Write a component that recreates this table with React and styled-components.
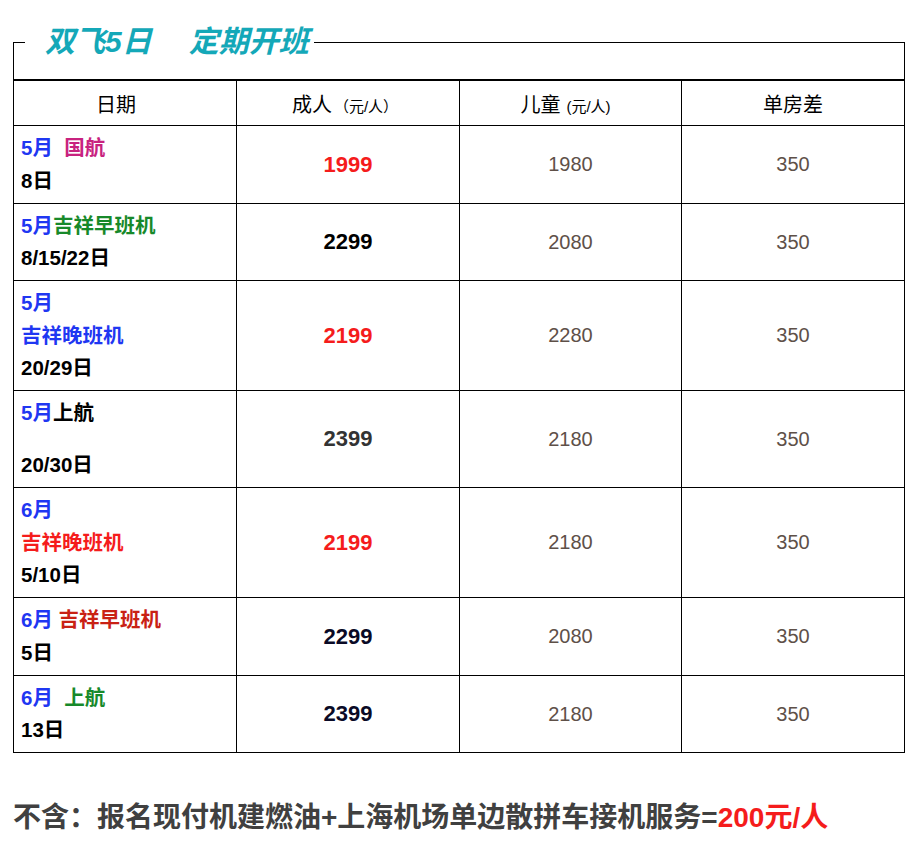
import React from "react";
import styled, { createGlobalStyle } from "styled-components";

const GlobalStyle = createGlobalStyle`
  *, *::before, *::after { box-sizing: border-box; }
  html, body { margin: 0; padding: 0; background: #ffffff; }
  body {
    font-family: "Liberation Sans", "Noto Sans CJK SC", Arial, sans-serif;
    color: #000;
  }
`;

const TONES = {
  blue: "#1f37f2",
  magenta: "#c8237f",
  green: "#17892a",
  red: "#f51c1c",
  darkred: "#c92114",
  black: "#000000",
  grey: "#333333",
  navy: "#0a0a26",
};

const Page = styled.div`
  padding: 42px 10px 0 13px;
  width: 915px;
`;

const Frame = styled.div`
  position: relative;
  width: 892px;
  height: 37px;
  border: 1px solid #000;
  border-bottom: none;
`;

const Title = styled.h1`
  position: absolute;
  top: -16px;
  left: 11px;
  margin: 0;
  padding: 0 5px 0 20px;
  background: #fff;
  font-family: "Liberation Sans", "Noto Sans CJK SC", sans-serif;
  font-size: 30px;
  line-height: 30px;
  font-weight: 700;
  font-style: italic;
  color: #14a8b8;
  white-space: nowrap;
`;

const TitleGap = styled.span`
  display: inline-block;
  width: 37px;
`;

const Table = styled.table`
  width: 892px;
  table-layout: fixed;
  border-collapse: separate;
  border-spacing: 0;
  border-left: 1px solid #000;
  border-top: 2px solid #000;
`;

const Head = styled.th`
  width: ${(p) => p.$w}px;
  height: 45px;
  padding: 0 ${(p) => p.$pr || 0}px 0 0;
  border-right: 1px solid #000;
  border-bottom: 1px solid #000;
  font-weight: 400;
  font-size: 20px;
  text-align: center;
  vertical-align: middle;
  color: #000;
  white-space: nowrap;
`;

const Unit = styled.span`
  font-size: 15px;
  margin-left: ${(p) => p.$ml || 2}px;
`;

const Cell = styled.td`
  padding: 6px 7px 5.5px;
  border-right: 1px solid #000;
  border-bottom: 1px solid #000;
  vertical-align: middle;
`;

const DateCell = styled(Cell)`
  text-align: left;
  font-size: 20.5px;
  line-height: 32.5px;
  font-weight: 700;
`;

const Line = styled.div`
  white-space: pre;
`;

const Gap = styled.div`
  height: 19.5px;
`;

const Tone = styled.span`
  color: ${(p) => TONES[p.$tone] || "#000"};
`;

const PriceCell = styled(Cell)`
  text-align: center;
  font-size: 22px;
  font-weight: 700;
  color: ${(p) => TONES[p.$tone]};
`;

const PlainCell = styled(Cell)`
  text-align: center;
  font-size: 20px;
  font-weight: 400;
  color: #5e5048;
`;

const Footer = styled.p`
  margin: 48px 0 0 0;
  font-family: "Liberation Sans", "Noto Sans CJK SC", sans-serif;
  font-size: 28px;
  line-height: 34px;
  font-weight: 700;
  color: #404040;
  white-space: nowrap;
`;

const Accent = styled.span`
  color: #f51c1c;
`;

const NB = "\u00a0";

const rows = [
  {
    lines: [
      [["5月", "blue"], [NB + NB + "国航", "magenta"]],
      [["8日", "black"]],
    ],
    price: "1999",
    priceTone: "red",
    child: "1980",
  },
  {
    lines: [
      [["5月", "blue"], ["吉祥早班机", "green"]],
      [["8/15/22日", "black"]],
    ],
    price: "2299",
    priceTone: "black",
    child: "2080",
  },
  {
    lines: [
      [["5月", "blue"]],
      [["吉祥晚班机", "blue"]],
      [["20/29日", "black"]],
    ],
    price: "2199",
    priceTone: "red",
    child: "2280",
  },
  {
    lines: [[["5月", "blue"], ["上航", "black"]], "gap", [["20/30日", "black"]]],
    price: "2399",
    priceTone: "grey",
    child: "2180",
  },
  {
    lines: [
      [["6月", "blue"]],
      [["吉祥晚班机", "red"]],
      [["5/10日", "black"]],
    ],
    price: "2199",
    priceTone: "red",
    child: "2180",
  },
  {
    lines: [
      [["6月", "blue"], [NB + "吉祥早班机", "darkred"]],
      [["5日", "black"]],
    ],
    price: "2299",
    priceTone: "navy",
    child: "2080",
  },
  {
    lines: [
      [["6月", "blue"], [NB + NB + "上航", "green"]],
      [["13日", "black"]],
    ],
    price: "2399",
    priceTone: "navy",
    child: "2180",
  },
];

export default function App() {
  return (
    <>
      <GlobalStyle />
      <Page>
        <Frame>
          <Title>
            双飞5日
            <TitleGap />
            定期开班
          </Title>
        </Frame>
        <Table>
          <thead>
            <tr>
              <Head $w={223} $pr={18}>日期</Head>
              <Head $w={223} $pr={6}>
                成人<Unit $ml={2}>（元/人）</Unit>
              </Head>
              <Head $w={222} $pr={10}>
                儿童<Unit $ml={6}>(元/人)</Unit>
              </Head>
              <Head $w={223}>单房差</Head>
            </tr>
          </thead>
          <tbody>
            {rows.map((r, i) => (
              <tr key={i}>
                <DateCell>
                  {r.lines.map((ln, j) =>
                    ln === "gap" ? (
                      <Gap key={j} />
                    ) : (
                      <Line key={j}>
                        {ln.map(([t, tone], k) => (
                          <Tone key={k} $tone={tone}>
                            {t}
                          </Tone>
                        ))}
                      </Line>
                    )
                  )}
                </DateCell>
                <PriceCell $tone={r.priceTone}>{r.price}</PriceCell>
                <PlainCell>{r.child}</PlainCell>
                <PlainCell>350</PlainCell>
              </tr>
            ))}
          </tbody>
        </Table>
        <Footer>
          不含：报名现付机建燃油+上海机场单边散拼车接机服务=<Accent>200元/人</Accent>
        </Footer>
      </Page>
    </>
  );
}
